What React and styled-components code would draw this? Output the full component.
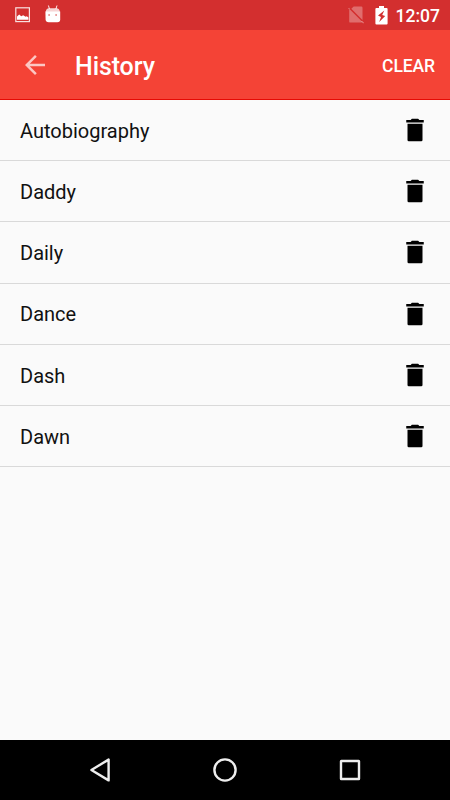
import React from 'react';
import styled, { createGlobalStyle } from 'styled-components';

const words = ['Autobiography', 'Daddy', 'Daily', 'Dance', 'Dash', 'Dawn'];

const App = () => {
    return (
        <Screen>
            <GlobalStyle />
            <StatusBar>
                <Notifications>
                    <PictureIcon />
                    <DroidIcon />
                </Notifications>
                <System>
                    <NoSimIcon />
                    <BatteryIcon />
                    <Clock>12:07</Clock>
                </System>
            </StatusBar>
            <Toolbar>
                <BackButton aria-label="Back">
                    <svg width="30" height="30" viewBox="0 0 24 24" fill="#fff" fillOpacity="0.7">
                        <path d="M20 11H7.83l5.59-5.59L12 4l-8 8 8 8 1.41-1.41L7.83 13H20v-2z" />
                    </svg>
                </BackButton>
                <Title>History</Title>
                <ClearButton>CLEAR</ClearButton>
            </Toolbar>
            <List>
                {words.map((word) => (
                    <Row key={word}>
                        <Word>{word}</Word>
                        <DeleteButton aria-label={`Delete ${word}`}>
                            <svg width="30" height="30" viewBox="0 0 24 24" fill="#000">
                                <path d="M6 20q0 1 1 1h10q1 0 1-1V7H6v13zM19 4h-3.5l-1-1h-5l-1 1H5v2h14V4z" />
                            </svg>
                        </DeleteButton>
                    </Row>
                ))}
            </List>
            <NavBar>
                <NavButton aria-label="Back">
                    <svg width="30" height="30" viewBox="0 0 30 30">
                        <path d="M23.6 4.6V25.4L6.4 15z" />
                    </svg>
                </NavButton>
                <NavButton aria-label="Home">
                    <svg width="30" height="30" viewBox="0 0 30 30">
                        <circle cx="15" cy="15" r="10.6" />
                    </svg>
                </NavButton>
                <NavButton aria-label="Recent apps">
                    <svg width="30" height="30" viewBox="0 0 30 30">
                        <rect x="6" y="6" width="18" height="18" rx="0.3" />
                    </svg>
                </NavButton>
            </NavBar>
        </Screen>
    )
}

const PictureIcon = () => (
    <svg width="16" height="16" viewBox="0 0 16 16">
        <rect x="0.8" y="0.8" width="13.6" height="13.8" fill="none" stroke="#fff" strokeOpacity="0.85" strokeWidth="1.2" />
        <path d="M2 12.8V9.4l2.2-1.9 2 1.8 2-1 2.4 1.5 1.2-.5 1.6 1.2v2.3z" fill="#fff" />
    </svg>
);

const DroidIcon = () => (
    <svg width="16" height="18" viewBox="0 0 16 18">
        <path d="M3.4 0.5L4.5 4M12 0.5L10.9 4" stroke="#fff" strokeOpacity="0.9" strokeWidth="1" />
        <path d="M0.7 7Q1 3.5 4 3.2h7.4q3.2.3 3.5 3.8z" fill="#fff" fillOpacity="0.8" />
        <path d="M0.4 6.4h14.8v8q0 2.7-2.8 2.8H3.6q-2.8-.1-3-2.8z" fill="#fff" />
        <circle cx="4.1" cy="10" r="0.9" fill="#d32f2f" fillOpacity="0.6" />
        <circle cx="11.1" cy="10" r="0.9" fill="#d32f2f" fillOpacity="0.6" />
    </svg>
);

const NoSimIcon = () => (
    <svg width="18" height="18" viewBox="0 0 18 18">
        <path d="M4.3 2.7L6.7.5h7.6q1.2 0 1.2 1.2v12.3zM2.2 2.7l13 13q-.3.9-1.2.9H3.4q-1.2 0-1.2-1.2z" fill="#fff" fillOpacity="0.3" />
        <path d="M1.6 2.1L2.4 2.9M14.6 15.1L16.6 17.1" stroke="#fff" strokeOpacity="0.35" strokeWidth="1.3" />
    </svg>
);

const BatteryIcon = () => (
    <svg width="13" height="19" viewBox="0 0 13 19">
        <path d="M4 0h5v2h2.6q1 0 1 1v14.5q0 1-1 1H1.4q-1 0-1-1V3q0-1 1-1H4z" fill="#fff" />
        <path d="M9.3 4.6L3 9.6l3 1.5L4.2 16l6-5.9-3-1.2z" fill="#d32f2f" />
    </svg>
);

const GlobalStyle = createGlobalStyle`
    body {
        margin: 0;
        background: #fafafa;
        font-family: Roboto, sans-serif;
    }
    button {
        display: flex;
        padding: 0;
        border: 0;
        background: none;
        font-family: inherit;
    }
    svg {
        display: block;
    }
`;

const Screen = styled.div`
    display: flex;
    flex-direction: column;
    width: 450px;
    height: 800px;
    overflow: hidden;
    background: #fafafa;
`;

const StatusBar = styled.div`
    display: flex;
    justify-content: space-between;
    height: 30px;
    box-sizing: border-box;
    padding: 0 10px 0 15px;
    background: #d32f2f;
`;

const Notifications = styled.div`
    display: flex;
    align-items: flex-start;
    gap: 14px;
    padding-top: 5px;
    svg:first-child {
        margin-top: 2px;
    }
`;

const System = styled.div`
    display: flex;
    align-items: center;
    svg:first-child {
        margin-right: 10px;
    }
`;

const Clock = styled.span`
    margin-left: 8px;
    color: #fff;
    font-size: 17.5px;
    font-weight: 500;
    line-height: 30px;
    padding-top: 2px;
`;

const Toolbar = styled.header`
    display: flex;
    align-items: center;
    height: 70px;
    box-sizing: border-box;
    padding: 0 15px 0 20px;
    background: #f44336;
    border-bottom: 1px solid #e60a04;
`;

const BackButton = styled.button`
    margin-right: 25px;
`;

const Title = styled.h1`
    flex: 1;
    margin: 4px 0 0;
    color: #fff;
    font-size: 25px;
    font-weight: 500;
    letter-spacing: -0.1px;
`;

const ClearButton = styled.button`
    color: #fff;
    font-size: 17.5px;
    font-weight: 500;
    letter-spacing: -0.1px;
    margin-top: 3px;
`;

const List = styled.ul`
    flex: 1;
    margin: 0;
    padding: 0;
    list-style: none;
`;

const Row = styled.li`
    display: flex;
    align-items: center;
    justify-content: space-between;
    height: 61.2px;
    box-sizing: border-box;
    padding: 0 20px;
    border-bottom: 1px solid #d9d9d9;
`;

const Word = styled.span`
    padding-top: 1.5px;
    color: #111;
    font-size: 20px;
`;

const DeleteButton = styled.button`
    flex: none;
`;

const NavBar = styled.nav`
    display: flex;
    align-items: center;
    justify-content: center;
    gap: 95px;
    height: 60px;
    background: #000;
    svg {
        fill: none;
        stroke: #eee;
        stroke-width: 2.4;
        stroke-linejoin: round;
    }
`;

const NavButton = styled.button`
    flex: none;
`;

export default App;
